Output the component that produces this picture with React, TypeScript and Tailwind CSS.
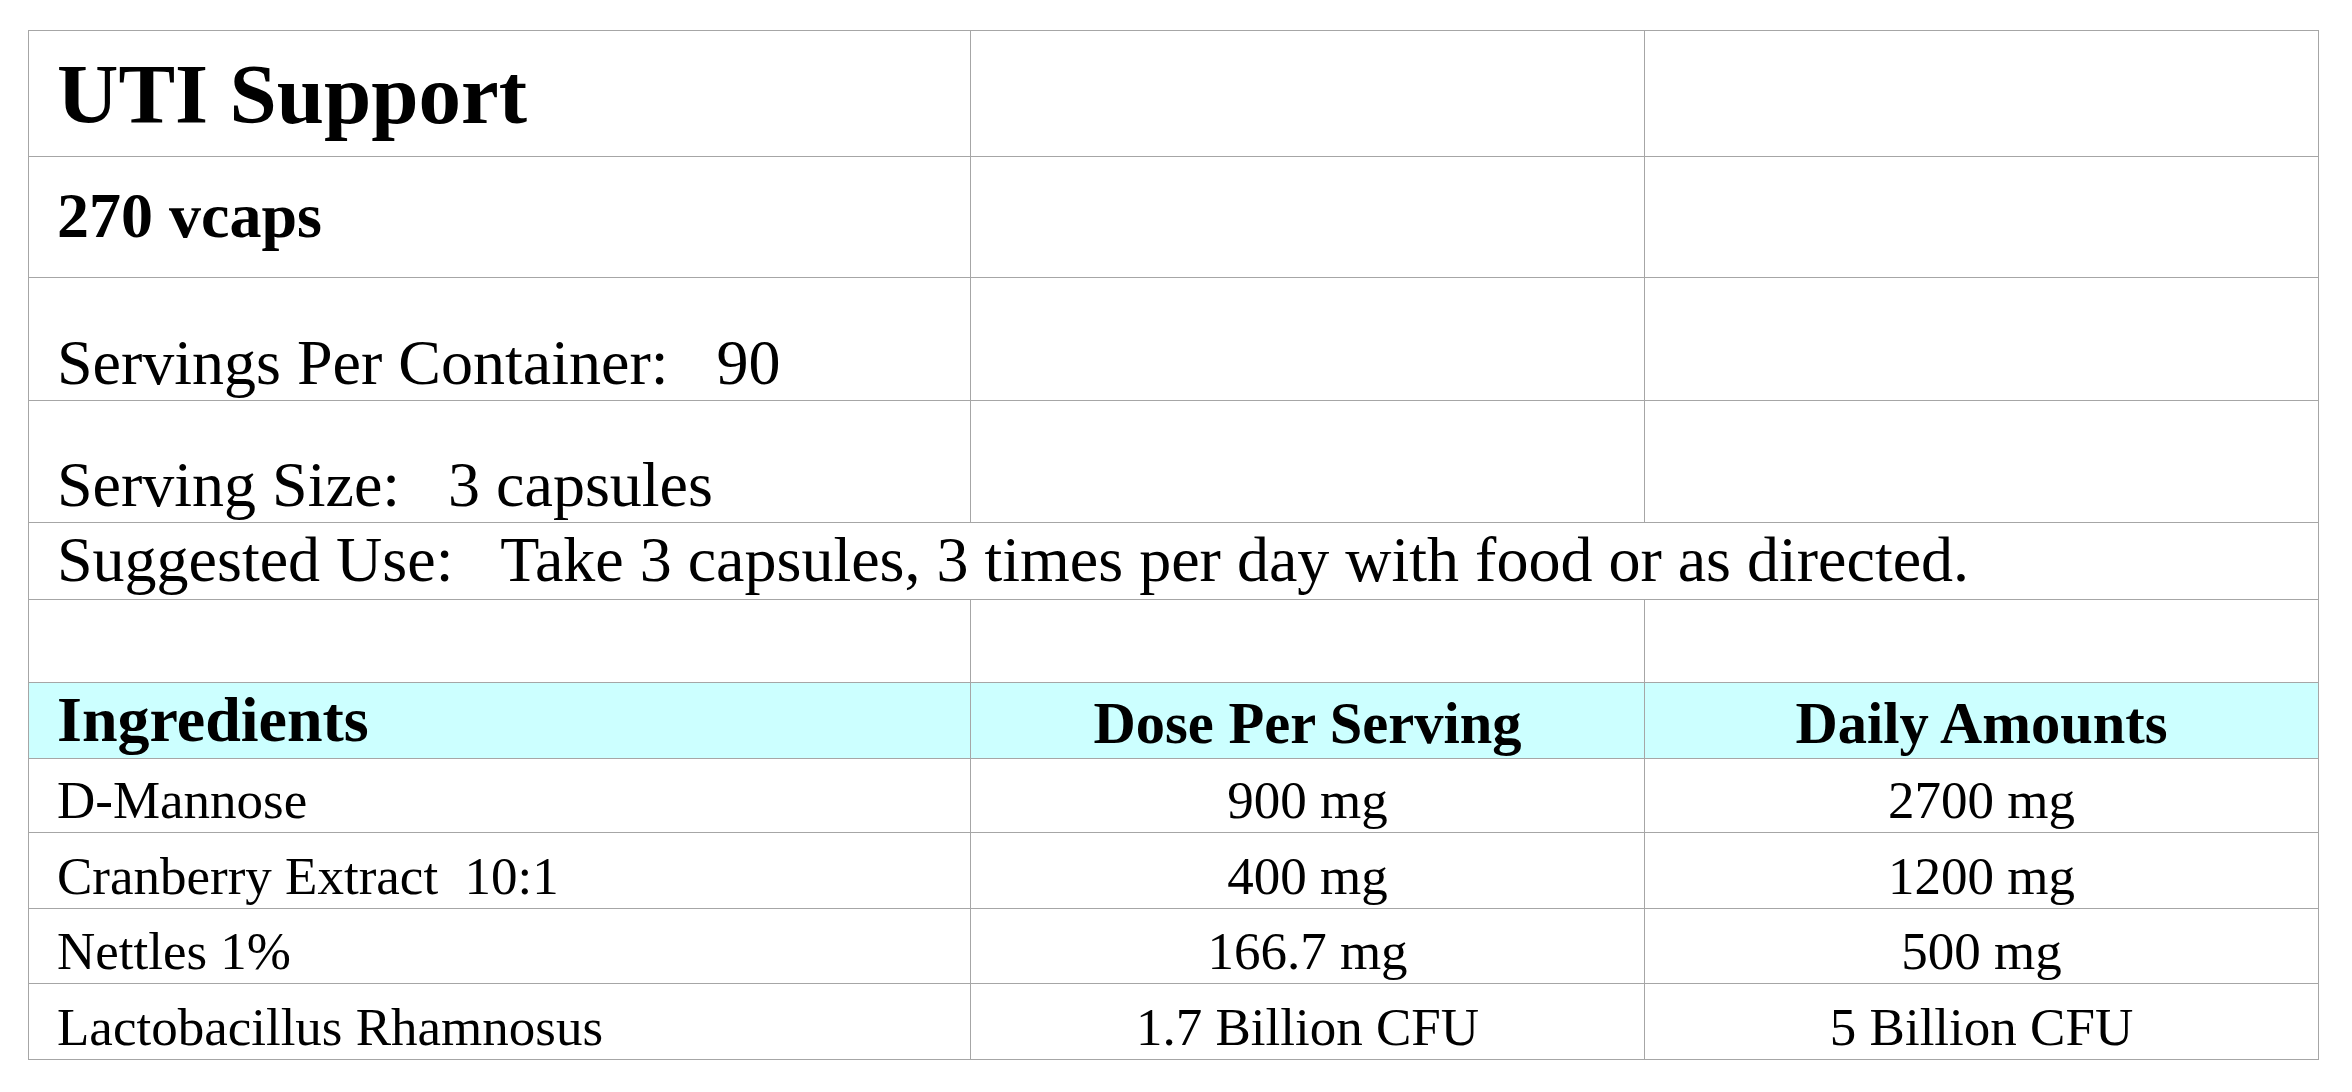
const serif = { fontFamily: '"Liberation Serif", "Times New Roman", Times, serif' }

const ingredients = [
  { name: 'D-Mannose', dose: '900 mg', daily: '2700 mg' },
  { name: 'Cranberry Extract\u00a0 10:1', dose: '400 mg', daily: '1200 mg' },
  { name: 'Nettles 1%', dose: '166.7 mg', daily: '500 mg' },
  { name: 'Lactobacillus Rhamnosus', dose: '1.7 Billion CFU', daily: '5 Billion CFU' },
]

// plain row with content only in the first column
function InfoRow({ height, children, textClass }: { height: string; children?: React.ReactNode; textClass: string }) {
  return (
    <div className={`flex ${height}`}>
      <div className={`w-[942px] border-r border-b border-[#a6a6a6] flex items-end pl-[28px] ${textClass}`}>
        {children}
      </div>
      <div className="w-[674px] border-r border-b border-[#a6a6a6]" />
      <div className="w-[674px] border-r border-b border-[#a6a6a6]" />
    </div>
  )
}

export default function App() {
  return (
    <div className="min-h-screen bg-white text-black pt-[30px] pl-[28px]" style={serif}>
      <div className="w-[2291px] border-t border-l border-[#a6a6a6]">
        {/* Product header */}
        <InfoRow height="h-[126px]" textClass="pb-[19px] text-[85px] font-bold leading-none">
          UTI Support
        </InfoRow>
        <InfoRow height="h-[121px]" textClass="pb-[29px] text-[64px] font-bold leading-none">
          270 vcaps
        </InfoRow>
        <InfoRow height="h-[123px]" textClass="pb-[5px] text-[64px] leading-none whitespace-pre">
          Servings Per Container:{'\u00a0\u00a0 '}90
        </InfoRow>
        <InfoRow height="h-[122px]" textClass="pb-[5px] text-[64px] leading-none whitespace-pre">
          Serving Size:{'\u00a0\u00a0 '}3 capsules
        </InfoRow>

        {/* Suggested use spans the whole table */}
        <div className="flex h-[77px]">
          <div className="w-[2290px] border-r border-b border-[#a6a6a6] flex items-end pl-[28px] pb-[7px] text-[64px] leading-none whitespace-nowrap">
            Suggested Use:{'\u00a0\u00a0 '}Take 3 capsules, 3 times per day with food or as directed.
          </div>
        </div>

        <InfoRow height="h-[83px]" textClass="" />

        {/* Ingredients header */}
        <div className="flex h-[76px] bg-[#ccffff] font-bold leading-none">
          <div className="w-[942px] border-r border-b border-[#a6a6a6] flex items-end pl-[28px] pb-[6px] text-[64px]">
            Ingredients
          </div>
          <div className="w-[674px] border-r border-b border-[#a6a6a6] flex items-end justify-center pb-[5px] text-[58.5px]">
            Dose Per Serving
          </div>
          <div className="w-[674px] border-r border-b border-[#a6a6a6] flex items-end justify-center pb-[5px] text-[58.5px]">
            Daily Amounts
          </div>
        </div>

        {/* Ingredient rows */}
        {ingredients.map((item, i) => (
          <div key={item.name} className={`flex text-[53px] leading-none ${i === 0 ? 'h-[74px]' : i === 2 ? 'h-[75px]' : 'h-[76px]'}`}>
            <div className="w-[942px] border-r border-b border-[#a6a6a6] flex items-end pl-[28px] pb-[5px] whitespace-pre">
              {item.name}
            </div>
            <div className="w-[674px] border-r border-b border-[#a6a6a6] flex items-end justify-center pb-[5px]">
              {item.dose}
            </div>
            <div className="w-[674px] border-r border-b border-[#a6a6a6] flex items-end justify-center pb-[5px]">
              {item.daily}
            </div>
          </div>
        ))}
      </div>
    </div>
  )
}
